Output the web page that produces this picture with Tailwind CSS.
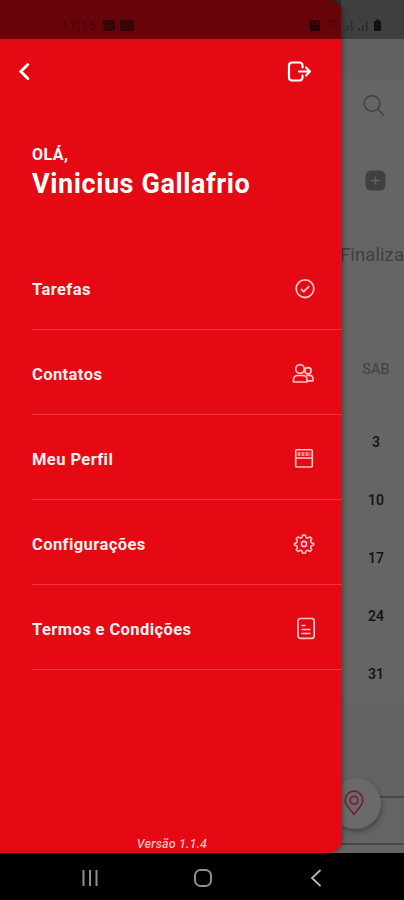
<!DOCTYPE html>
<html lang="pt-BR">
<head>
<meta charset="utf-8">
<meta name="viewport" content="width=device-width, initial-scale=1">
<title>Menu</title>
<script src="https://cdn.jsdelivr.net/npm/@tailwindcss/browser@4"></script>
</head>
<body class="bg-black font-['Roboto','Liberation_Sans',sans-serif]">
<div class="relative flex h-[900px] w-[404px] flex-col overflow-hidden bg-black">

  <!-- Calendar page behind the drawer -->
  <main class="flex h-[853px] flex-col bg-[#656565] pl-[341px]">
    <div class="h-[79px] shrink-0 bg-[#616161]"></div>
    <div class="flex h-[53px] shrink-0 justify-center pt-[15px] pl-[3px]">
      <svg class="size-[24px]" viewBox="0 0 24 24" fill="none" stroke="#404040" stroke-width="1.4"><circle cx="10" cy="9.500" r="7.800"/><path d="M15.700 15.200L22 21.500"/></svg>
    </div>
    <div class="flex h-[88px] shrink-0 justify-center pt-[38px] pl-[6px]">
      <svg class="size-[21px]" viewBox="0 0 21 21"><rect x=".5" y=".5" width="20" height="20" rx="5.500" fill="#404040"/><path d="M10.500 6.500v8M6.500 10.500h8" stroke="#626262" stroke-width="1.300"/></svg>
    </div>
    <div class="-ml-px h-[130px] shrink-0 pt-[21px] text-[18.500px] leading-[28px] tracking-[.1px] whitespace-nowrap text-[#3f3f3f]">Finaliza</div>
    <div class="flex shrink-0 flex-col pl-[7px] text-center text-[14px] font-medium text-[#111]">
      <span class="h-[63px] pt-[9px] text-[14.500px] leading-[22px] font-normal tracking-[.2px] text-[#414141]">SAB</span>
      <span class="h-[58px] leading-[58px]">3</span>
      <span class="h-[58px] leading-[58px]">10</span>
      <span class="h-[58px] leading-[58px]">17</span>
      <span class="h-[58px] leading-[58px]">24</span>
      <span class="h-[58px] leading-[58px]">31</span>
    </div>
    <div class="h-[95px] shrink-0 border-b-2 border-[#484848] bg-[#626262]"></div>
    <div class="h-[47px] shrink-0 border-b-2 border-[#484848] bg-[#646464]"></div>
  </main>
  <div class="absolute top-[778px] left-[330px] flex size-[51px] items-center justify-center rounded-full bg-[#6a6a6a] pr-[3px] pb-px shadow-[1px_3px_5px_rgba(0,0,0,.3)]">
    <svg class="h-[26px] w-[20px]" viewBox="0 0 20 26" fill="none" stroke="#74202f" stroke-width="1.700"><path d="M10 24.200C8 21 1.200 16 1.200 10a8.800 8.800 0 0 1 17.600 0C18.800 16 12 21 10 24.200Z"/><circle cx="10" cy="10.300" r="3.900"/></svg>
  </div>

  <!-- Drawer -->
  <aside class="absolute top-0 left-0 flex h-[853px] w-[342px] flex-col rounded-r-[14px] bg-[#e50914] pl-[32px] text-white shadow-[1px_0_4px_rgba(0,0,0,.35)]">
    <div class="flex h-[105px] shrink-0 items-end justify-between pr-[30px] pb-[21px]">
      <svg class="-ml-[14px] h-[25px] w-[13px]" viewBox="0 0 13 25" fill="none" stroke="#fff" stroke-width="2.900" stroke-linecap="round"><path d="M9.800 5.500L2.800 12.500L9.800 19.500"/></svg>
      <svg class="h-[24px] w-[25px]" viewBox="0 0 25 24" fill="none" stroke="#fff" stroke-width="2.200" stroke-linecap="round" stroke-linejoin="round"><path d="M15.500 7.500V5.500a3 3 0 0 0-3-3H5a3 3 0 0 0-3 3v12a3 3 0 0 0 3 3h7.500a3 3 0 0 0 3-3v-2"/><path d="M12 11.500h11M19 7.500l4 4l-4 4"/></svg>
    </div>
    <div class="flex h-[140px] shrink-0 flex-col pt-[40px] whitespace-nowrap">
      <span class="text-[16px] leading-[20px] font-bold tracking-[.5px]">OLÁ,</span>
      <h1 class="pt-[3px] text-[27px] leading-[32px] font-bold tracking-[.6px]">Vinicius Gallafrio</h1>
    </div>
    <nav class="flex flex-col text-[16.500px] font-bold tracking-[.42px] text-[#fff0f0]">
      <a class="flex h-[85px] items-center justify-between border-b border-[#f5333c] pt-[3px] pr-[26px]"><span class="pt-[4px]">Tarefas</span>
        <svg class="size-[22px]" viewBox="0 0 22 22" fill="none" stroke="#ffc4c7" stroke-width="1.800"><circle cx="11" cy="10.700" r="8.800"/><path d="M7 11l2.700 2.700l5.500-5.500"/></svg></a>
      <a class="flex h-[85px] items-center justify-between border-b border-[#f5333c] pt-[3px] pr-[27px]"><span class="pt-[4px]">Contatos</span>
        <svg class="size-[24px]" viewBox="0 0 24 24" fill="none" stroke="#ffc4c7" stroke-width="1.700" stroke-linejoin="round"><circle cx="9" cy="7" r="4.300"/><path d="M2.500 20v-2.500a4 4 0 0 1 4-4h5.500a4 4 0 0 1 4 4V20Z"/><circle cx="17" cy="8.800" r="3.100"/><path d="M15.500 13.300h3a3.600 3.600 0 0 1 3.500 3.600V18.800h-5.500"/></svg></a>
      <a class="flex h-[85px] items-center justify-between border-b border-[#f5333c] pt-[3px] pr-[27px]"><span class="pt-[4px]">Meu Perfil</span>
        <svg class="size-[22px]" viewBox="0 0 22 22" fill="none" stroke="#ffc4c7" stroke-width="1.600"><rect x="2.700" y="1.700" width="16.600" height="17.300" rx="1"/><path d="M2.500 10h17"/><path d="M4.500 6h13" stroke-width="3.800" stroke-dasharray="3 1" opacity=".7"/></svg></a>
      <a class="flex h-[85px] items-center justify-between border-b border-[#f5333c] pt-[3px] pr-[27px]"><span class="pt-[4px]">Configurações</span>
        <svg class="size-[22px]" viewBox="0 0 22 22" fill="none" stroke="#ffc4c7" stroke-width="1.600" stroke-linejoin="round"><path d="M9.700 2h2.600l.7 2.400l1.800.7l2.200-1.200l1.800 1.800l-1.200 2.200l.7 1.800l2.400.7v1.600l-2.400.7l-.7 1.800l1.200 2.200l-1.800 1.800l-2.200-1.200l-1.800.7l-.7 2.200H9.700L9 18l-1.800-.7L5 18.500l-1.800-1.800l1.200-2.200l-.7-1.800L1.500 12v-1.600l2.200-.7l.7-1.800L3.200 5.700L5 3.900l2.200 1.200L9 4.400Z"/><circle cx="11" cy="11" r="2.600"/></svg></a>
      <a class="flex h-[85px] items-center justify-between border-b border-[#f5333c] pt-[3px] pr-[26px]"><span class="pt-[4px]">Termos e Condições</span>
        <svg class="h-[24px] w-[20px]" viewBox="0 0 20 24" fill="none" stroke="#ffc4c7" stroke-width="1.700"><rect x="2" y="1.500" width="16.200" height="19.800" rx="2.500"/><path d="M5.500 8.500h4M5.500 12.500h9M5.500 16.500h9"/></svg></a>
    </nav>
    <div class="mt-auto pr-[30px] pb-px text-center text-[12.500px] leading-[16px] font-medium tracking-[.15px] text-[#ffb8bc] italic">Versão 1.1.4</div>
  </aside>

  <!-- Status bar -->
  <header class="absolute inset-x-0 top-0 flex h-[39px] items-end pb-[6px] pl-[61px] text-[#32050a]">
    <div class="absolute inset-y-0 left-0 w-[341px] bg-black/55"></div>
    <div class="absolute inset-y-0 right-0 w-[63px] bg-black/35"></div>
    <span class="relative w-[41px] text-[13px] leading-[15px] tracking-[.7px] text-[#490006]">17:16</span>
    <svg class="relative h-[15px] w-[34px]" viewBox="0 0 34 15"><rect x="1" y="2" width="12" height="11" rx="1.500" fill="currentColor"/><path d="M3 11l3-4l2 2l3-3" fill="none" stroke="#62000a"/><rect x="18" y="2" width="14" height="11" rx="2" fill="currentColor"/><path d="M20 8q3-3 5 0t5 0" fill="none" stroke="#52000a"/></svg>
    <svg class="relative ml-[172px] h-[15px] w-[78px]" viewBox="0 0 78 15"><path d="M2 2h10v11H2Z" fill="#280308"/><path d="M5 3v3l2 1l2-1V3" fill="none" stroke="#62000a"/><path d="M20 4q5-3 10 0M22 8q3-2 6 0" fill="none" stroke="#52000a" stroke-width="1.500"/><path d="M35 13h2v-2h-2ZM39 13h1.500V8H39ZM43 13h1.500V3H43ZM50 13h2v-3h-2ZM54 13h1.500V7H54ZM58 13h1.500V3H58Z" fill="#2b2b2b"/><path d="M66 3h2V1.500h3V3h2v10h-7Z" fill="#111"/></svg>
  </header>

  <!-- Navigation bar -->
  <footer class="flex h-[47px] items-center bg-black pt-[3px] pl-[81px]">
    <svg class="size-[18px]" viewBox="0 0 18 18" stroke="#8e8e8e" stroke-width="2"><path d="M2.500 1v16M9 1v16M15.500 1v16"/></svg>
    <svg class="ml-[95px] size-[18px]" viewBox="0 0 18 18" fill="none" stroke="#8e8e8e" stroke-width="2"><rect x="1" y="1" width="16" height="16" rx="5.500"/></svg>
    <svg class="ml-[98px] h-[18px] w-[12px]" viewBox="0 0 12 18" fill="none" stroke="#b5b5b5" stroke-width="1.800"><path d="M10.500 1L2 9l8.500 8"/></svg>
  </footer>
</div>
</body>
</html>
